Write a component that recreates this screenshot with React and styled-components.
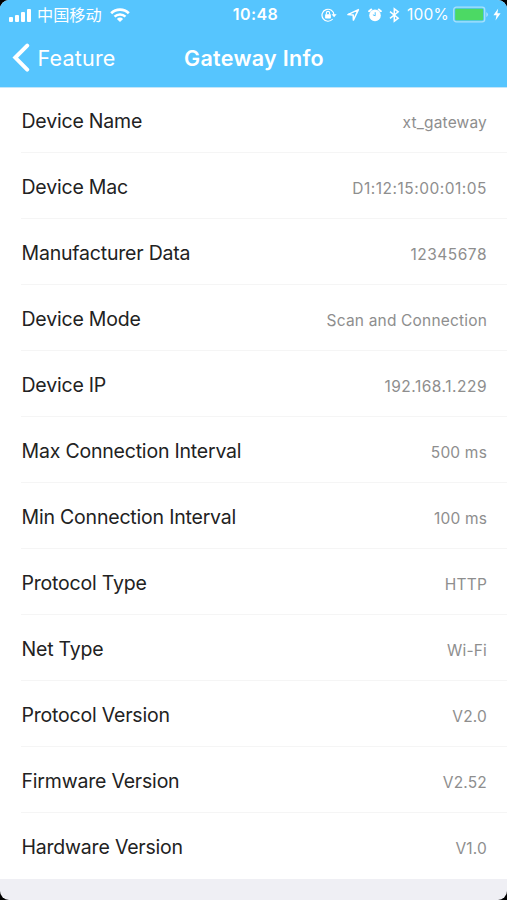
import styled, { createGlobalStyle } from "styled-components";

const GlobalStyle = createGlobalStyle`
  * {
    box-sizing: border-box;
  }

  body {
    margin: 0;
    background: #000;
    font-family: Inter, "Noto Sans CJK SC", sans-serif;
  }
`;

const Screen = styled.div`
  display: flex;
  flex-direction: column;
  height: 900px;
  overflow: hidden;
  background: #efeff4;
  border-radius: 9px;
`;

const Header = styled.header`
  height: 88px;
  flex: none;
  color: #fff;
  background: #56c5fe;
  border-bottom: 1px solid #c4e6f9;
`;

const StatusBar = styled.div`
  display: grid;
  grid-template-columns: 1fr auto 1fr;
  align-items: center;
  height: 29px;
  padding: 0 6px 0 9px;
`;

const StatusLeft = styled.div`
  display: flex;
  align-items: center;
`;

const StatusRight = styled.div`
  display: flex;
  align-items: center;
  justify-content: flex-end;
`;

const Carrier = styled.span`
  margin: 0 8px 0 5px;
  font-family: "Noto Sans CJK SC", sans-serif;
  font-size: 16.2px;
  line-height: 29px;
`;

const Clock = styled.span`
  padding-left: 1px;
  font-size: 16px;
  font-weight: 600;
  letter-spacing: 0.4px;
  line-height: 29px;
`;

const Percent = styled.span`
  margin: 0 4px 0 7px;
  font-size: 15.5px;
  letter-spacing: 0.2px;
  line-height: 29px;
`;

const StatusIcon = styled.svg`
  display: block;
  flex: none;
  margin-left: ${({ $gap }) => $gap || 0}px;
`;

const NavBar = styled.nav`
  display: grid;
  grid-template-columns: 1fr auto 1fr;
  align-items: center;
  height: 58px;
  padding: 0 11px;
`;

const BackButton = styled.button`
  display: flex;
  align-items: center;
  gap: 7.5px;
  padding: 0;
  border: 0;
  color: inherit;
  background: none;
  font-family: inherit;
  font-size: 21.5px;
  letter-spacing: 0.2px;
  line-height: 58px;
`;

const Title = styled.h1`
  margin: 0;
  padding-left: 1px;
  font-size: 21.5px;
  font-weight: 600;
  letter-spacing: 0.3px;
  line-height: 58px;
`;

const List = styled.ul`
  flex: none;
  margin: 0;
  padding: 0;
  list-style: none;
  background: #fff;
`;

const Row = styled.li`
  display: flex;
  height: 66px;
  padding-left: 21px;

  &:first-child {
    height: 65px;
  }
`;

const RowBody = styled.div`
  display: flex;
  flex: 1;
  align-items: flex-end;
  justify-content: space-between;
  padding: 0 20px 0 0.5px;
  border-bottom: 1px solid #f5f5f5;

  ${Row}:last-child & {
    border-bottom-color: transparent;
  }
`;

const Label = styled.span`
  color: #222;
  font-size: 19.5px;
  letter-spacing: -0.2px;
  line-height: 61px;
`;

const Value = styled.span`
  color: #8e8e8e;
  font-size: 15.5px;
  letter-spacing: ${({ $numeric }) => ($numeric ? 0.5 : 0.18)}px;
  line-height: 58px;
`;

const info = [
  { label: "Device Name", value: "xt_gateway" },
  { label: "Device Mac", value: "D1:12:15:00:01:05", numeric: true },
  { label: "Manufacturer Data", value: "12345678", numeric: true },
  { label: "Device Mode", value: "Scan and Connection" },
  { label: "Device IP", value: "192.168.1.229", numeric: true },
  { label: "Max Connection Interval", value: "500 ms" },
  { label: "Min Connection Interval", value: "100 ms" },
  { label: "Protocol Type", value: "HTTP" },
  { label: "Net Type", value: "Wi-Fi" },
  { label: "Protocol Version", value: "V2.0" },
  { label: "Firmware Version", value: "V2.52" },
  { label: "Hardware Version", value: "V1.0" },
];

const SignalIcon = () => (
  <StatusIcon width="23" height="14" viewBox="0 0 23 14" fill="#fff">
    <rect x="0" y="9" width="4" height="5" rx="1" />
    <rect x="6" y="7" width="4" height="7" rx="1" />
    <rect x="12" y="4" width="4" height="10" rx="1" />
    <rect x="18" y="1" width="4" height="13" rx="1" />
  </StatusIcon>
);

const WifiIcon = () => (
  <StatusIcon width="20" height="14" viewBox="0 0 20 14" fill="none" stroke="#fff">
    <path d="M1.2 5.2A12.5 12.5 0 0 1 18.8 5.2" strokeWidth="2.7" />
    <path d="M4.5 8.7A7.8 7.8 0 0 1 15.5 8.7" strokeWidth="2.4" />
    <path d="M10 14L6.9 10.9A4.4 4.4 0 0 1 13.1 10.9Z" fill="#fff" stroke="none" />
  </StatusIcon>
);

const RotationLockIcon = () => (
  <StatusIcon width="16" height="14" viewBox="0 0 16 14" fill="none" stroke="#fff">
    <path d="M11.7 11A6 6 0 1 1 13 7" strokeWidth="1.2" />
    <path d="M10.5 6.3H15.6L13.1 9.2Z" fill="#fff" stroke="none" />
    <rect x="4.1" y="6.2" width="5.8" height="4.2" rx="0.6" fill="#fff" stroke="none" />
    <path d="M5.4 6.5V5A1.6 1.6 0 0 1 8.6 5V6.5" strokeWidth="1.1" />
  </StatusIcon>
);

const LocationIcon = () => (
  <StatusIcon $gap={9} width="14" height="14" viewBox="0 0 14 14" fill="none">
    <path
      d="M12.4 1.6L1.9 6.6L7.2 7L7.4 12.1Z"
      stroke="#fff"
      strokeWidth="1.5"
      strokeLinejoin="round"
    />
  </StatusIcon>
);

const AlarmIcon = () => (
  <StatusIcon $gap={8} width="14" height="14" viewBox="0 0 14 14">
    <circle cx="7" cy="7.4" r="5.8" fill="#fff" />
    <path
      d="M1.1 3.2L3.2 1.5M12.9 3.2L10.8 1.5"
      stroke="#fff"
      strokeWidth="2"
      strokeLinecap="round"
    />
    <path d="M7.2 4.2V7.8L4.9 6.8" fill="none" stroke="#56c5fe" strokeWidth="1" />
  </StatusIcon>
);

const BluetoothIcon = () => (
  <StatusIcon $gap={7} width="11" height="16" viewBox="0 0 11 16" fill="none">
    <path
      d="M1 4.6L9.2 11.2L5.3 14.2V1.8L9.2 4.8L1 11.4"
      stroke="#fff"
      strokeWidth="1.5"
    />
  </StatusIcon>
);

const BatteryIcon = () => (
  <StatusIcon width="36" height="17" viewBox="0 0 36 17">
    <rect
      x="0.7"
      y="1.2"
      width="31"
      height="14.6"
      rx="2.6"
      fill="none"
      stroke="#a9e1fb"
      strokeWidth="1.3"
    />
    <rect x="2.2" y="2.7" width="28" height="11.6" rx="1" fill="#4cd964" />
    <path d="M33.3 6V11Q35 10 35 8.5Q35 7 33.3 6Z" fill="#a9e1fb" />
  </StatusIcon>
);

const BoltIcon = () => (
  <StatusIcon $gap={4} width="8" height="13" viewBox="0 0 8 13" fill="#fff">
    <path d="M5.2 0.4L0.4 7.3H3.5L2.5 12.6L7.6 5.3H4.4Z" />
  </StatusIcon>
);

const BackIcon = () => (
  <svg width="19" height="30" viewBox="0 0 19 30" fill="none">
    <path
      d="M16.2 2.6L4.3 14.6L16.2 26.6"
      stroke="#fff"
      strokeWidth="4"
      strokeLinecap="round"
    />
  </svg>
);

const App = () => {
  return (
    <>
      <GlobalStyle />
      <Screen>
        <Header>
          <StatusBar>
            <StatusLeft>
              <SignalIcon />
              <Carrier>中国移动</Carrier>
              <WifiIcon />
            </StatusLeft>
            <Clock>10:48</Clock>
            <StatusRight>
              <RotationLockIcon />
              <LocationIcon />
              <AlarmIcon />
              <BluetoothIcon />
              <Percent>100%</Percent>
              <BatteryIcon />
              <BoltIcon />
            </StatusRight>
          </StatusBar>
          <NavBar>
            <BackButton>
              <BackIcon />
              Feature
            </BackButton>
            <Title>Gateway Info</Title>
          </NavBar>
        </Header>
        <List>
          {info.map(({ label, value, numeric }) => (
            <Row key={label}>
              <RowBody>
                <Label>{label}</Label>
                <Value $numeric={numeric}>{value}</Value>
              </RowBody>
            </Row>
          ))}
        </List>
      </Screen>
    </>
  );
};

export default App;
